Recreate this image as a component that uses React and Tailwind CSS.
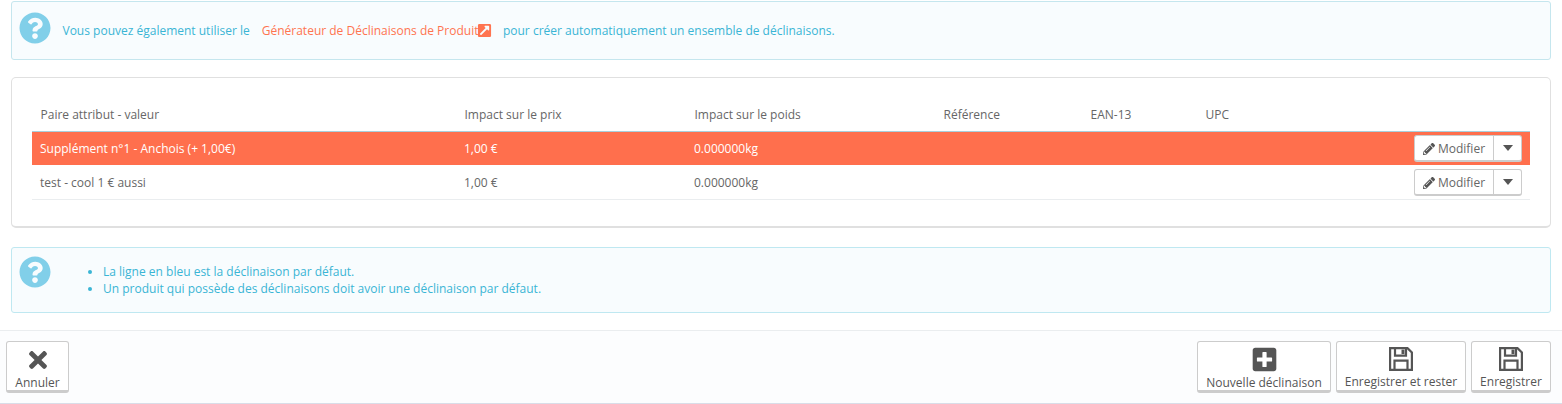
import React from 'react';
import { FaQuestionCircle, FaPencilAlt, FaExternalLinkSquareAlt, FaTimes, FaPlusSquare } from 'react-icons/fa';

const rows = [
  { name: 'Supplément n°1 - Anchois (+ 1,00€)', price: '1,00 €', weight: '0.000000kg', active: true },
  { name: 'test - cool 1 € aussi', price: '1,00 €', weight: '0.000000kg', active: false },
];

const headers = ['Paire attribut - valeur', 'Impact sur le prix', 'Impact sur le poids', 'Référence', 'EAN-13', 'UPC'];

// floppy outline, thicker than the one in the icon packs
const SaveIcon = () => (
  <svg viewBox="0 0 24 24" className="h-[24px] w-[24px]" fill="none" stroke="#555" strokeWidth="2.2">
    <path d="M1.1 1.1H18.5L22.9 5.5V22.9H1.1Z" />
    <path d="M6 1.1V8.6H17V1.1" />
    <path d="M12.5 2.6H15.5V7H12.5Z" fill="#555" stroke="none" />
    <path d="M5.5 22.9V13.6H18.5V22.9" />
  </svg>
);

const ToolbarButton = ({ icon, label, className }) => (
  <button className={`flex h-[52px] flex-col items-center rounded-[3px] border border-[#ccc] border-b-[3px] bg-white pt-[4px] text-[12px] leading-[17px] text-[#555] ${className}`}>
    <span className="flex h-[26px] items-center text-[#555]">{icon}</span>
    <span className="mt-[2px]">{label}</span>
  </button>
);

const App = () => {
  return (
    <div className="h-[404px] w-[1562px] overflow-hidden bg-white font-['Open_Sans',sans-serif] text-[12px] text-[#555]">
      <div className="px-[11px] pt-[1px]">
        {/* Top hint */}
        <div className="flex h-[59px] items-center rounded-[3px] border border-[#c5e6ee] bg-[#f8fcfe] pl-[7px]">
          <FaQuestionCircle className="h-[32px] w-[32px] shrink-0 -translate-y-[3px] text-[#81cfe9]" />
          <span className="ml-[11.5px] text-[#3ab5d5]">Vous pouvez également utiliser le</span>
          <a className="ml-[12px] flex items-center text-[#ff7450]">
            Générateur de Déclinaisons de Produit
            <FaExternalLinkSquareAlt className="-ml-[1px] h-[15px] w-[15px]" />
          </a>
          <span className="ml-[10.5px] text-[#3ab5d5]">pour créer automatiquement un ensemble de déclinaisons.</span>
        </div>

        {/* Combinations table */}
        <div className="mt-[17px] h-[151px] rounded-[5px] border border-[#e0e0e0] border-b-[2px] bg-white px-[20px] pt-[20px]">
          <table className="w-[1498px] table-fixed border-separate border-spacing-0">
            <colgroup>
              <col className="w-[424px]" />
              <col className="w-[230px]" />
              <col className="w-[249px]" />
              <col className="w-[147px]" />
              <col className="w-[115px]" />
              <col />
            </colgroup>
            <thead>
              <tr className="text-left text-[#666]">
                {headers.map((title) => (
                  <th key={title} className="h-[34px] border-b border-[#a9cfdc] pl-[8.5px] font-normal">{title}</th>
                ))}
              </tr>
            </thead>
            <tbody>
              {rows.map((row) => {
                const cell = row.active ? 'h-[33px] bg-[#ff6f4d] text-white' : 'h-[35px] border-b border-[#eaedef] pt-[1px] text-[#666]';
                return (
                  <tr key={row.name}>
                    <td className={`pl-[8px] ${cell}`}>{row.name}</td>
                    <td className={`pl-[8px] ${cell}`}>{row.price}</td>
                    <td className={`pl-[8px] ${cell}`}>{row.weight}</td>
                    <td className={cell} />
                    <td className={cell} />
                    <td className={`pr-[8px] ${cell}`}>
                      <div className="flex justify-end">
                        <div className="flex h-[27px] items-stretch rounded-[3px] border border-[#ccc] border-b-[2px] bg-white text-[#666]">
                          <span className="flex w-[78px] items-center justify-center gap-[3px] pt-[1px]">
                            <FaPencilAlt className="h-[12px] w-[12px] text-[#555]" />
                            Modifier
                          </span>
                          <span className="flex w-[28px] items-center justify-center border-l border-[#ccc]">
                            <span className="h-0 w-0 border-x-[5px] border-t-[6px] border-x-transparent border-t-[#555]" />
                          </span>
                        </div>
                      </div>
                    </td>
                  </tr>
                );
              })}
            </tbody>
          </table>
        </div>

        {/* Default combination hint */}
        <div className="mt-[19px] flex h-[66px] rounded-[3px] border border-[#bfe8f1] bg-[#f8fcfe] pl-[7px] pt-[8px]">
          <FaQuestionCircle className="h-[32px] w-[32px] shrink-0 text-[#81cfe9]" />
          <ul className="ml-[39px] mt-[7px] list-disc pl-[13px] leading-[17px] text-[#3ab5d5]">
            <li>La ligne en bleu est la déclinaison par défaut.</li>
            <li>Un produit qui possède des déclinaisons doit avoir une déclinaison par défaut.</li>
          </ul>
        </div>
      </div>

      {/* Footer toolbar */}
      <div className="mt-[17px] flex h-[74px] items-start justify-between border-y border-[#eaedef] border-b-[#d9dde8] bg-[#fcfdfe] px-[6px] pt-[10px]">
        <ToolbarButton className="w-[63px]" label="Annuler" icon={<FaTimes className="h-[26px] w-[26px] translate-y-[1px]" />} />
        <div className="flex gap-[5px] pr-[5px]">
          <ToolbarButton className="w-[134px]" label="Nouvelle déclinaison" icon={<FaPlusSquare className="h-[27px] w-[27px]" />} />
          <ToolbarButton className="w-[130px]" label="Enregistrer et rester" icon={<SaveIcon />} />
          <ToolbarButton className="w-[80px]" label="Enregistrer" icon={<SaveIcon />} />
        </div>
      </div>
    </div>
  );
};

export default App;
